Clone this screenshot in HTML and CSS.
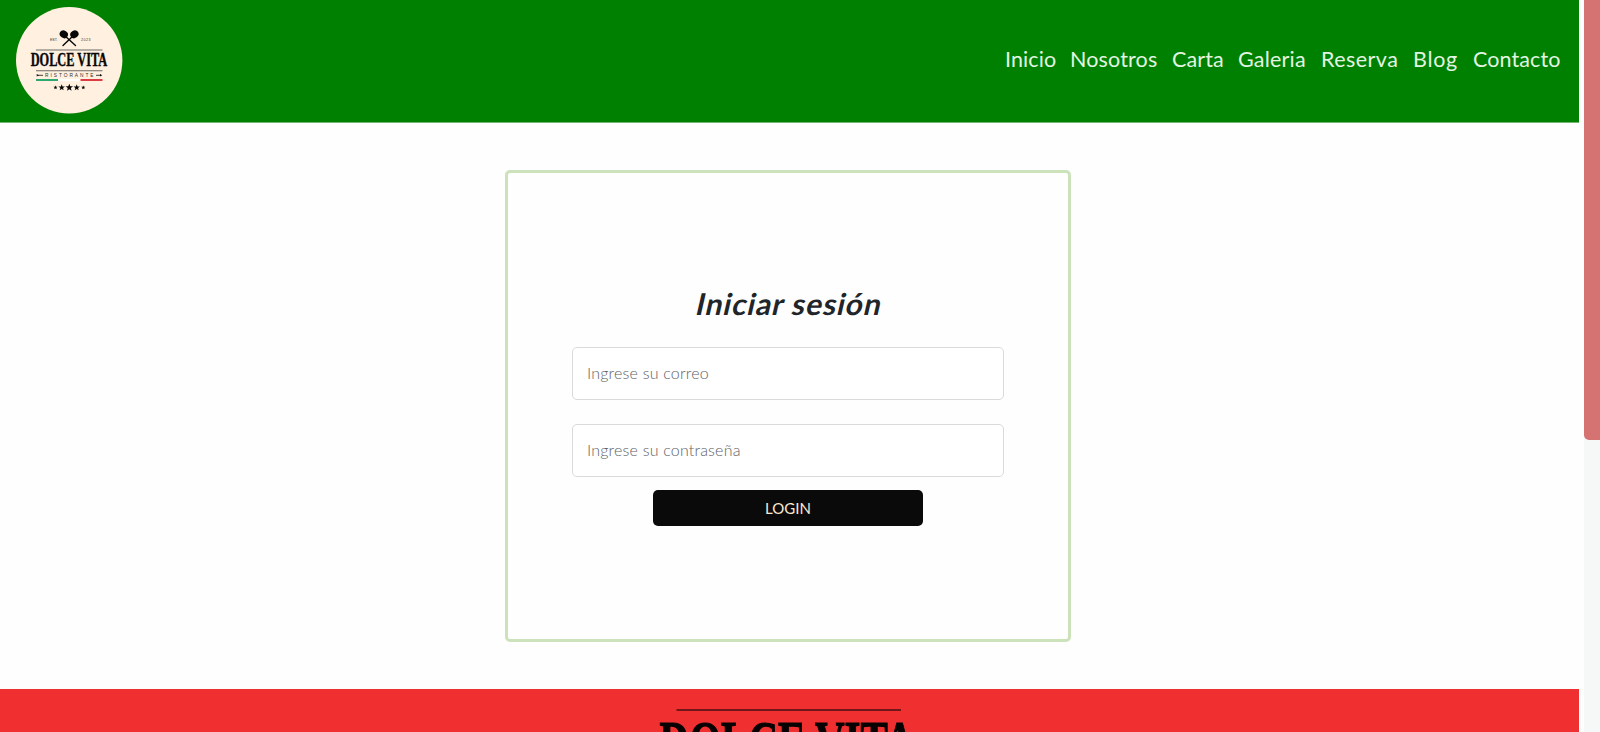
FILE: index.html
```html
<!DOCTYPE html>
<html lang="es">
<head>
<meta charset="utf-8">
<title>Dolce Vita</title>
<link rel="stylesheet" href="styles.css">
</head>
<body>
<div class="page">
  <header class="navbar">
    <svg class="logo" viewBox="16 7 107 107">
      <circle cx="69.200" cy="60.300" r="53.2" fill="#fff0e0"/>
      <g stroke="#080808" stroke-width="1.4" stroke-linecap="round">
        <path d="M64 35 75.500 45.500M74 35 63 45.500"/>
      </g>
      <ellipse cx="63.800" cy="34.300" rx="4.300" ry="3.700" transform="rotate(35 63.800 34.300)" fill="#080808"/>
      <ellipse cx="74.400" cy="34.300" rx="4.300" ry="3.700" transform="rotate(-35 74.400 34.300)" fill="#080808"/>
      <text class="tiny" x="50" y="40.500" textLength="7.500">EST.</text>
      <text class="tiny" x="81" y="40.500" textLength="9.500">2023</text>
      <path d="M36 50H102.500M36 70.700H102.500" stroke="#6d6864" stroke-width="1.100"/>
      <text class="brand" x="30.700" y="66" textLength="76.500" lengthAdjust="spacingAndGlyphs">DOLCE VITA</text>
      <path d="M38 75.300H43M96 75.300H101" stroke="#111" stroke-width=".8"/>
      <path d="M36.700 74 39 75.300 36.700 76.600ZM102.300 75.300 100 74V76.600Z" fill="#111"/>
      <text class="subtitle" x="45" y="77.100" textLength="48.500">RISTORANTE</text>
      <path d="M36 80H58" stroke="#25a36b" stroke-width="1.900"/>
      <path d="M58 80H80.500" stroke="#fff" stroke-width="1.900"/>
      <path d="M80.500 80H102.500" stroke="#dc3038" stroke-width="1.900"/>
      <defs><path id="star" d="M0-3.500.9-1.100 3.400-1.100 1.400.5 2.100 3 0 1.500-2.100 3-1.400.5-3.400-1.100-.9-1.100Z"/></defs>
      <g fill="#080808">
        <use href="#star" transform="translate(55.500 87.500) scale(.6)"/>
        <use href="#star" transform="translate(61.700 87.500) scale(.95)"/>
        <use href="#star" transform="translate(69.300 87.500) scale(1.100)"/>
        <use href="#star" transform="translate(76.700 87.500) scale(.95)"/>
        <use href="#star" transform="translate(83.300 87.500) scale(.6)"/>
      </g>
    </svg>
    <nav class="menu">
      <a class="link inicio">Inicio</a>
      <a class="link nosotros">Nosotros</a>
      <a class="link carta">Carta</a>
      <a class="link galeria">Galeria</a>
      <a class="link reserva">Reserva</a>
      <a class="link blog">Blog</a>
      <a class="link contacto">Contacto</a>
    </nav>
  </header>
  <main class="content">
    <form class="card">
      <h1 class="title">Iniciar sesión</h1>
      <input class="field" type="email" placeholder="Ingrese su correo">
      <input class="field password" type="password" placeholder="Ingrese su contraseña">
      <button class="login" type="button">LOGIN</button>
    </form>
  </main>
  <footer class="footer">
    <svg class="footer-logo" width="260" height="80" viewBox="0 0 260 80">
      <path d="M20.500 21H245" stroke="#711719" stroke-width="1.800"/>
      <text class="footer-brand" x="3.500" y="73" textLength="255" lengthAdjust="spacingAndGlyphs">DOLCE VITA</text>
    </svg>
  </footer>
</div>
<div class="scrollbar"><div class="thumb"></div></div>
</body>
</html>
```
FILE: styles.css
```css
* { box-sizing: border-box; }
body {
  margin: 0;
  height: 732px;
  overflow: hidden;
  display: flex;
  justify-content: space-between;
  background: #fefefe;
  font-family: Lato, sans-serif;
}
.page { width: 1579px; height: 732px; overflow: hidden; }
.navbar {
  height: 123px;
  padding: 7px 17px 0 16px;
  border-bottom: 1px solid #72b872;
  display: flex;
  justify-content: space-between;
  background: #008000;
}
.logo { width: 107px; height: 107px; overflow: visible; }
.tiny { font: 3.6px "Liberation Sans", sans-serif; fill: #333; }
.brand { font: bold 18px "Liberation Serif", serif; fill: #080808; stroke: #080808; stroke-width: 0.4px; }
.subtitle { font: 4.8px "Liberation Sans", sans-serif; fill: #333; }
.menu { display: flex; gap: 15px; padding: 38px 0 0; }
.link { font-size: 21.5px; line-height: 28px; color: #e2f5e2; white-space: nowrap; }
.inicio { width: 50px; letter-spacing: 0.1px; }
.nosotros { width: 87px; letter-spacing: 0.15px; }
.carta { width: 51px; letter-spacing: 0.1px; }
.galeria { width: 68px; letter-spacing: 0.2px; }
.reserva { width: 77px; letter-spacing: 0.45px; }
.blog { width: 45px; letter-spacing: 0.7px; }
.contacto { width: 89px; letter-spacing: 0.1px; }
.content { height: 566px; padding: 47px 0 0 505px; }
.card {
  width: 566px;
  height: 472px;
  padding: 112px 64px 0;
  border: 3px solid #cbe2bb;
  border-radius: 5px;
  display: flex;
  flex-direction: column;
  align-items: center;
}
.title {
  margin: 0 0 25px;
  padding-left: 4px;
  font-size: 30px;
  line-height: 37px;
  font-weight: 700;
  color: #212529;
  letter-spacing: 0.95px;
  transform: skewX(-13deg);
}
.field {
  width: 432px;
  height: 53px;
  flex: none;
  padding: 0 14px 3px;
  border: 1px solid #d9dadc;
  border-radius: 5px;
  background: #fff;
  font: 300 16px Lato, sans-serif;
  letter-spacing: 0.2px;
}
.field::placeholder { color: #5c6267; opacity: 1; }
.password { margin: 24px 0 13px; }
.login {
  width: 270px;
  height: 36px;
  padding: 0;
  border: 0;
  border-radius: 5px;
  background: #0a0a0a;
  color: #fae8d0;
  font: 15px Lato, sans-serif;
}
.footer { height: 43px; padding-left: 656px; background: #f03030; }
.footer-logo { display: block; }
.footer-brand { font: bold 60px "Liberation Serif", serif; fill: #080303; stroke: #080303; stroke-width: 1.2px; }
.scrollbar { width: 16px; height: 732px; background: #f6f8f8; }
.thumb { height: 440px; border-radius: 0 0 0 5px; background: #d57373; }
```
